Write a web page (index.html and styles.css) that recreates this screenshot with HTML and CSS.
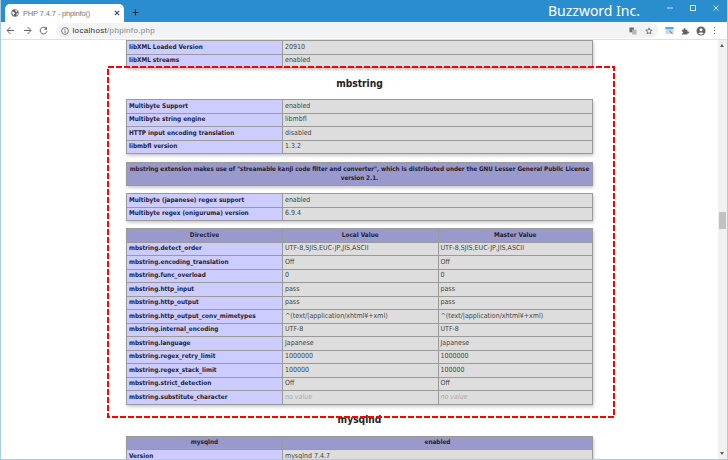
FILE: index.html
```html
<!DOCTYPE html>
<html lang="en">
<head>
<meta charset="utf-8">
<title>PHP 7.4.7 - phpinfo()</title>
<link rel="stylesheet" href="styles.css">
</head>
<body>
<div class="window">
  <header class="tabbar">
    <div class="tab">
      <svg class="globe" width="8" height="8" viewBox="0 0 8 8"><circle cx="4" cy="4" r="3.7" fill="#5f6368"/><path d="M1 2.500l2 .5 1 1.500-1 .5v2L1.500 5zM4 .8l2 .4.5 1.300L5 3zM5.500 4.500l1.500-.5-.5 2-1 .8z" fill="#fff"/></svg>
      <span class="tab-title">PHP 7.4.7 - phpinfo()</span>
      <svg class="tab-close" width="6" height="6" viewBox="0 0 6 6"><path d="M.8.800l4.400 4.400M5.200.800L.8 5.200" stroke="#444" stroke-width="1.100"/></svg>
    </div>
    <svg class="newtab" width="7" height="7" viewBox="0 0 7 7"><path d="M3.500.5v6M.5 3.500h6" stroke="#10314a" stroke-width="1.100"/></svg>
    <div class="brand">Buzzword Inc.</div>
    <div class="winctl">
      <svg width="6" height="6" viewBox="0 0 6 6"><path d="M0 3h6" stroke="#cfe6f5"/></svg>
      <svg width="6" height="6" viewBox="0 0 6 6"><rect x=".5" y=".5" width="5" height="5" fill="none" stroke="#cfe6f5"/></svg>
      <svg width="6" height="6" viewBox="0 0 6 6"><path d="M.5.500l5 5M5.500.500l-5 5" stroke="#cfe6f5"/></svg>
    </div>
  </header>
  <nav class="toolbar">
    <svg class="navicon" width="9" height="9" viewBox="0 0 9 9"><path d="M8 4.500H1.200M4.500 1L1 4.500 4.500 8" fill="none" stroke="#5f6368" stroke-width="1"/></svg>
    <svg class="navicon" width="9" height="9" viewBox="0 0 9 9"><path d="M1 4.500h6.800M4.500 1L8 4.500 4.500 8" fill="none" stroke="#5f6368" stroke-width="1"/></svg>
    <svg class="navicon" width="9" height="9" viewBox="0 0 9 9"><path d="M7.600 3A3.400 3.400 0 1 0 7.900 5.200" fill="none" stroke="#5f6368" stroke-width="1"/><path d="M8 .8v3H5z" fill="#5f6368"/></svg>
    <div class="omnibox">
      <svg class="info" width="8" height="8" viewBox="0 0 8 8"><circle cx="4" cy="4" r="3.400" fill="none" stroke="#5f6368" stroke-width=".8"/><path d="M4 3.400v2.600M4 2v.9" stroke="#5f6368" stroke-width=".8"/></svg>
      <span class="url"><span class="host">localhost</span>/phpinfo.php</span>
      <span class="omni-right">
        <svg width="8" height="8" viewBox="0 0 9 9"><rect x=".5" y=".5" width="5" height="5.500" fill="#6d7074"/><rect x="3.500" y="3" width="5" height="5.500" fill="#b4b7ba"/></svg>
        <svg width="8" height="8" viewBox="0 0 9 9"><path d="M4.500 1l1 2.400 2.600.2-2 1.700.6 2.500-2.200-1.300-2.200 1.300.6-2.500-2-1.700 2.600-.2z" fill="none" stroke="#5f6368" stroke-width=".9"/></svg>
      </span>
    </div>
    <div class="extensions">
      <svg width="9" height="9" viewBox="0 0 9 9"><rect x=".5" y="1" width="8" height="7" fill="#bcdcf3"/><rect x=".5" y="1" width="8" height="2" fill="#5aa7de"/><path d="M4.500 5l3 2.500" stroke="#e0433a" stroke-width="1"/></svg>
      <svg width="8" height="8" viewBox="0 0 9 9"><path d="M1 3h2V2a1 1 0 0 1 2 0v1h2.200v2h1a1 1 0 0 1 0 2h-1v1.500H1V7h.5a1 1 0 0 0 0-2H1z" fill="#5f6368"/></svg>
      <svg width="10" height="10" viewBox="0 0 10 10"><circle cx="5" cy="5" r="4.500" fill="#5f6368"/><circle cx="5" cy="3.800" r="1.500" fill="#fff"/><path d="M2.200 7.600c1.200-1.600 4.400-1.600 5.600 0-1.400 1.300-4.200 1.300-5.600 0z" fill="#fff"/></svg>
      <svg width="3" height="9" viewBox="0 0 3 9"><path d="M1.500 1v1M1.500 4v1M1.500 7v1" stroke="#5f6368" stroke-width="1"/></svg>
    </div>
  </nav>
  <div class="viewport">
    <main class="content">
      <table class="info-table first">
        <tr><td class="e">libXML Loaded Version</td><td class="v">20910</td></tr>
        <tr><td class="e">libXML streams</td><td class="v">enabled</td></tr>
      </table>
      <h2 class="module">mbstring</h2>
      <table class="info-table">
        <tr><td class="e">Multibyte Support</td><td class="v">enabled</td></tr>
        <tr><td class="e">Multibyte string engine</td><td class="v">libmbfl</td></tr>
        <tr><td class="e">HTTP input encoding translation</td><td class="v">disabled</td></tr>
        <tr><td class="e">libmbfl version</td><td class="v">1.3.2</td></tr>
      </table>
      <div class="notice">mbstring extension makes use of "streamable kanji code filter and converter", which is distributed under the GNU Lesser General Public License version 2.1.</div>
      <table class="info-table middle">
        <tr><td class="e">Multibyte (japanese) regex support</td><td class="v">enabled</td></tr>
        <tr><td class="e">Multibyte regex (oniguruma) version</td><td class="v">6.9.4</td></tr>
      </table>
      <table class="info-table three">
        <tr class="h"><th>Directive</th><th>Local Value</th><th>Master Value</th></tr>
        <tr><td class="e">mbstring.detect_order</td><td class="v">UTF-8,SJIS,EUC-JP,JIS,ASCII</td><td class="v">UTF-8,SJIS,EUC-JP,JIS,ASCII</td></tr>
        <tr><td class="e">mbstring.encoding_translation</td><td class="v">Off</td><td class="v">Off</td></tr>
        <tr><td class="e">mbstring.func_overload</td><td class="v">0</td><td class="v">0</td></tr>
        <tr><td class="e">mbstring.http_input</td><td class="v">pass</td><td class="v">pass</td></tr>
        <tr><td class="e">mbstring.http_output</td><td class="v">pass</td><td class="v">pass</td></tr>
        <tr><td class="e">mbstring.http_output_conv_mimetypes</td><td class="v">^(text/|application/xhtml¥+xml)</td><td class="v">^(text/|application/xhtml¥+xml)</td></tr>
        <tr><td class="e">mbstring.internal_encoding</td><td class="v">UTF-8</td><td class="v">UTF-8</td></tr>
        <tr><td class="e">mbstring.language</td><td class="v">Japanese</td><td class="v">Japanese</td></tr>
        <tr><td class="e">mbstring.regex_retry_limit</td><td class="v">1000000</td><td class="v">1000000</td></tr>
        <tr><td class="e">mbstring.regex_stack_limit</td><td class="v">100000</td><td class="v">100000</td></tr>
        <tr><td class="e">mbstring.strict_detection</td><td class="v">Off</td><td class="v">Off</td></tr>
        <tr><td class="e">mbstring.substitute_character</td><td class="v"><i>no value</i></td><td class="v"><i>no value</i></td></tr>
      </table>
      <h2 class="module second">mysqlnd</h2>
      <table class="info-table">
        <tr class="h"><th>mysqlnd</th><th>enabled</th></tr>
        <tr><td class="e">Version</td><td class="v">mysqlnd 7.4.7</td></tr>
      </table>
      <svg class="highlight" width="510" height="353" viewBox="0 0 510 353"><rect x="1" y="1" width="506" height="350" fill="none" stroke="#f00" stroke-width="2" stroke-dasharray="6 2"/></svg>
    </main>
    <div class="scrollbar">
      <span class="arrow up"></span>
      <div class="thumb"></div>
      <span class="arrow down"></span>
    </div>
  </div>
</div>
</body>
</html>
```
FILE: styles.css
```css
* { box-sizing: border-box; }
html, body { margin: 0; padding: 0; }
body { width: 728px; height: 460px; overflow: hidden; background: #fff; font-family: "DejaVu Sans Condensed", "DejaVu Sans", sans-serif; }

.window { width: 728px; height: 460px; display: flex; flex-direction: column; border: 1px solid #a8cde0; border-top: 0; }

.tabbar { height: 22px; flex: none; background: #2a8dcd; display: flex; align-items: flex-end; padding-left: 4px; }
.tab { width: 119px; height: 18px; background: #fff; border-radius: 5px 5px 0 0; display: flex; align-items: center; padding: 0 4px 0 6px; gap: 4px; }
.globe { flex: none; }
.tab-title { flex: 1; font-family: "Liberation Sans", sans-serif; font-size: 7.500px; letter-spacing: -0.150px; color: #777; white-space: nowrap; }
.tab-close { flex: none; }
.newtab { margin: 0 0 6px 8px; flex: none; }
.brand { margin-left: auto; align-self: center; font-family: "Noto Sans", sans-serif; font-size: 14px; color: #fff; line-height: 22px; margin-right: 87px; }
.winctl { position: absolute; top: 5px; right: 9px; display: flex; gap: 17px; }

.toolbar { height: 18px; flex: none; background: #fff; display: flex; align-items: center; padding-left: 5px; border-bottom: 1px solid #dfe1e5; }
.navicon { margin-right: 7.500px; flex: none; }
.omnibox { width: 602px; height: 15px; border-radius: 8px; background: #f1f3f4; display: flex; align-items: center; padding: 0 5px 0 5px; gap: 4px; }
.info { flex: none; }
.url { font-family: "Liberation Sans", sans-serif; font-size: 8px; letter-spacing: 0.330px; color: #80868b; }
.host { color: #333; }
.omni-right { margin-left: auto; display: flex; gap: 8px; }
.extensions { display: flex; align-items: center; gap: 7px; margin-left: 7px; }

.viewport { flex: 1; min-height: 0; display: flex; }
.content { position: relative; flex: 1; min-width: 0; overflow: hidden; display: flex; flex-direction: column; align-items: center; }

.info-table { width: 467px; flex: none; table-layout: fixed; border-collapse: collapse; font-size: 7px; color: #222; box-shadow: 1px 2px 3px #ccc; margin-bottom: 9px; }
.info-table td, .info-table th { border: 1px solid #9a9a9a; height: 13.500px; padding: 0 2px; line-height: 9px; vertical-align: middle; white-space: nowrap; overflow: hidden; }
.info-table td:first-child, .info-table th:first-child { width: 156px; }
.three th:nth-child(2), .three td:nth-child(2) { width: 155.500px; }
.e { background: #ccf; font-weight: bold; font-size: 6.400px; color: #223; }
.v { background: #ddd; color: #444; }
.v i { color: #aaa; }
.h th { background: #99c; font-weight: bold; font-size: 6.400px; color: #223; text-align: center; }
.first { margin-bottom: 0; }
.middle { margin-bottom: 7px; }
.three { margin-bottom: 0; }

.module { margin: 0; height: 31px; flex: none; font-size: 10.200px; line-height: 32px; font-weight: bold; color: #222; text-align: center; }
.second { height: 31px; line-height: 30px; }

.notice { width: 467px; flex: none; background: #99c; border: 1px solid #9a9a9a; box-shadow: 1px 2px 3px #ccc; padding: 1px 0; font-size: 6.250px; font-weight: bold; line-height: 9.500px; color: #223; text-align: center; margin: -1.500px 0 7.500px; height: 24px; }

.highlight { position: absolute; left: 106px; top: 26px; }

.scrollbar { width: 9px; flex: none; background: #f1f1f1; display: flex; flex-direction: column; align-items: center; position: relative; padding: 9px 0; }
.thumb { width: 7px; height: 17px; background: #c1c1c1; margin-top: 163px; }
.arrow { position: absolute; left: 2px; width: 0; height: 0; border-left: 2.500px solid transparent; border-right: 2.500px solid transparent; }
.arrow.up { top: 4px; border-bottom: 3px solid #606060; }
.arrow.down { bottom: 4px; border-top: 3px solid #606060; }
```
